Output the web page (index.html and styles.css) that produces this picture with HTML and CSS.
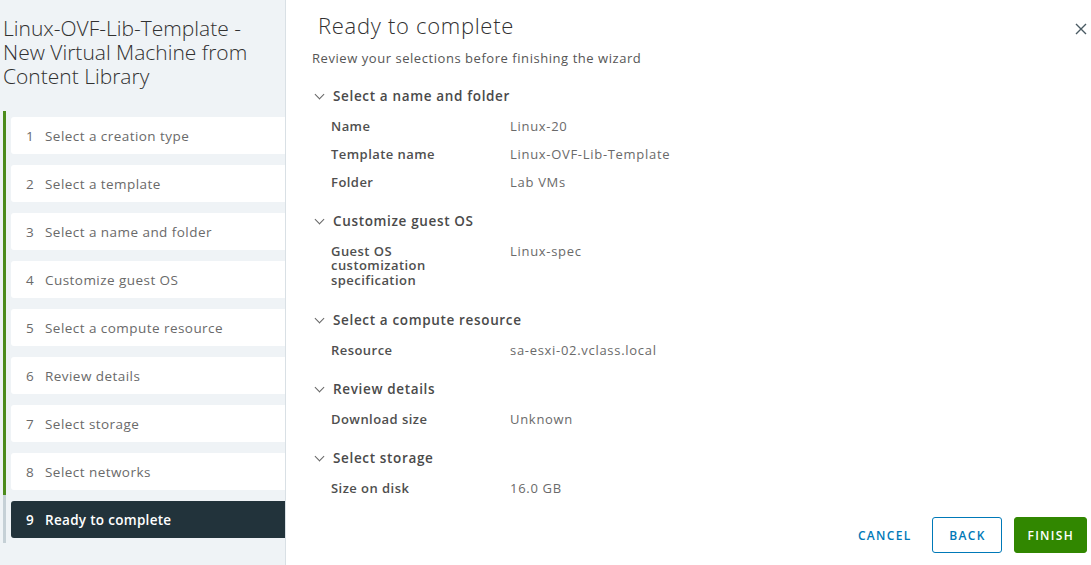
FILE: index.html
```html
<!DOCTYPE html>
<html lang="en">
<head>
    <meta charset="UTF-8">
    <meta name="viewport" content="width=device-width, initial-scale=1.0">
    <title>New Virtual Machine from Content Library</title>
    <link rel="stylesheet" href="styles.css">
</head>
<body>
    <div class="wizard">
        <aside class="sidebar">
            <h1 class="wizard-title">Linux-OVF-Lib-Template - New Virtual Machine from Content Library</h1>
            <ol class="steps">
                <li class="step done"><div class="step-box"><span class="step-num">1</span>Select a creation type</div></li>
                <li class="step done"><div class="step-box"><span class="step-num">2</span>Select a template</div></li>
                <li class="step done"><div class="step-box"><span class="step-num">3</span>Select a name and folder</div></li>
                <li class="step done"><div class="step-box"><span class="step-num">4</span>Customize guest OS</div></li>
                <li class="step done"><div class="step-box"><span class="step-num">5</span>Select a compute resource</div></li>
                <li class="step done"><div class="step-box"><span class="step-num">6</span>Review details</div></li>
                <li class="step done"><div class="step-box"><span class="step-num">7</span>Select storage</div></li>
                <li class="step done"><div class="step-box"><span class="step-num">8</span>Select networks</div></li>
                <li class="step current"><div class="step-box"><span class="step-num">9</span>Ready to complete</div></li>
            </ol>
        </aside>

        <main class="content">
            <div class="content-head">
                <h2 class="page-title">Ready to complete</h2>
                <button class="close-btn" type="button" aria-label="Close">
                    <svg width="12" height="12" viewBox="0 0 12 12">
                        <path d="M1 1 L11 11 M11 1 L1 11" stroke="#4a5a63" stroke-width="1.4" fill="none"/>
                    </svg>
                </button>
            </div>
            <p class="subtitle">Review your selections before finishing the wizard</p>

            <div class="summary">
                <section class="group">
                    <div class="group-head"><span class="chevron"></span>Select a name and folder</div>
                    <div class="row"><div class="label">Name</div><div class="value">Linux-20</div></div>
                    <div class="row"><div class="label">Template name</div><div class="value">Linux-OVF-Lib-Template</div></div>
                    <div class="row"><div class="label">Folder</div><div class="value">Lab VMs</div></div>
                </section>

                <section class="group">
                    <div class="group-head"><span class="chevron"></span>Customize guest OS</div>
                    <div class="row"><div class="label multiline">Guest OS<br>customization<br>specification</div><div class="value">Linux-spec</div></div>
                </section>

                <section class="group">
                    <div class="group-head"><span class="chevron"></span>Select a compute resource</div>
                    <div class="row"><div class="label">Resource</div><div class="value">sa-esxi-02.vclass.local</div></div>
                </section>

                <section class="group">
                    <div class="group-head"><span class="chevron"></span>Review details</div>
                    <div class="row"><div class="label">Download size</div><div class="value">Unknown</div></div>
                </section>

                <section class="group">
                    <div class="group-head"><span class="chevron"></span>Select storage</div>
                    <div class="row"><div class="label">Size on disk</div><div class="value">16.0 GB</div></div>
                </section>
            </div>

            <div class="actions">
                <button class="btn btn-link" type="button">Cancel</button>
                <button class="btn btn-outline" type="button">Back</button>
                <button class="btn btn-success" type="button">Finish</button>
            </div>
        </main>
    </div>
</body>
</html>
```

FILE: styles.css
```css
body {
    margin: 0;
    font-family: "Open Sans", Lato, sans-serif;
    color: #565656;
    background-color: #fff;
}

.wizard {
    display: flex;
    height: 565px;
    overflow: hidden;
}

/* left side: title + step list */
.sidebar {
    width: 285px;
    flex-shrink: 0;
    background-color: #eff3f6;
    border-right: 1px solid #d9e0e5;
}

.wizard-title {
    margin: 16px 0 0 3px;
    font-size: 21px;
    line-height: 24px;
    font-weight: 300;
    color: #313131;
}

.steps {
    list-style: none;
    margin: 23px 0 0 3px;
    padding: 0;
}

.step {
    padding: 6px 0 5px 5px;
    border-left: 3px solid #60b515;
}

.step.done {
    border-left-color: #4d8c1d;
}

.step.current {
    border-left-color: #c5d0d6;
}

.step-box {
    display: flex;
    align-items: center;
    height: 37px;
    padding-left: 15px;
    background-color: #fff;
    border-radius: 3px 0 0 3px;
    font-size: 13.5px;
    letter-spacing: 0.45px;
    color: #6a6a6a;
}

.step-num {
    width: 19px;
}

.step.current .step-box {
    background-color: #22333b;
    color: #fff;
    font-weight: 600;
    letter-spacing: 0.3px;
}

/* right side */
.content {
    flex: 1;
    display: flex;
    flex-direction: column;
    padding: 11px 4px 12px 26px;
}

.content-head {
    display: flex;
    justify-content: space-between;
    align-items: flex-start;
}

.page-title {
    margin: 0 0 0 6px;
    font-size: 22px;
    line-height: 28px;
    font-weight: 300;
    letter-spacing: 0.7px;
    color: #313131;
}

.close-btn {
    margin-top: 12px;
    padding: 0;
    border: none;
    background: none;
    cursor: pointer;
}

.subtitle {
    margin: 10px 0 0;
    font-size: 13px;
    line-height: 18px;
    letter-spacing: 0.55px;
    color: #565656;
}

.summary {
    flex: 1;
    margin-top: 19px;
}

.group {
    margin-bottom: 15px;
}

.group-head {
    display: flex;
    align-items: center;
    padding-left: 2px;
    padding-bottom: 6px;
    font-size: 13.5px;
    line-height: 20px;
    font-weight: 600;
    letter-spacing: 0.65px;
    color: #4a4a4a;
}

.chevron {
    width: 6px;
    height: 6px;
    margin: -4px 10px 0 2px;
    border-right: 1.3px solid #666;
    border-bottom: 1.3px solid #666;
    transform: rotate(45deg);
}

.row {
    display: flex;
    padding: 6.5px 0 6.5px 19px;
    font-size: 13px;
    line-height: 15px;
}

.label {
    width: 179px;
    font-weight: 600;
    letter-spacing: 0.45px;
    color: #4f4f4f;
}

.label.multiline {
    line-height: 14.5px;
    padding-bottom: 1.5px;
}

.value {
    letter-spacing: 0.7px;
    color: #6a6a6a;
}

.actions {
    display: flex;
    justify-content: flex-end;
    gap: 12px;
}

.btn {
    height: 36px;
    min-width: 70px;
    padding: 0 12px;
    border-radius: 3px;
    font-family: inherit;
    font-size: 12px;
    font-weight: 600;
    letter-spacing: 1.3px;
    text-transform: uppercase;
    cursor: pointer;
}

.btn-link {
    padding-right: 8px;
    border: 1px solid transparent;
    background: none;
    color: #0079b8;
}

.btn-outline {
    border: 1px solid #0079b8;
    background-color: #fff;
    color: #0079b8;
}

.btn-success {
    min-width: 72px;
    border: 1px solid #318700;
    background-color: #318700;
    color: #fff;
}
```
